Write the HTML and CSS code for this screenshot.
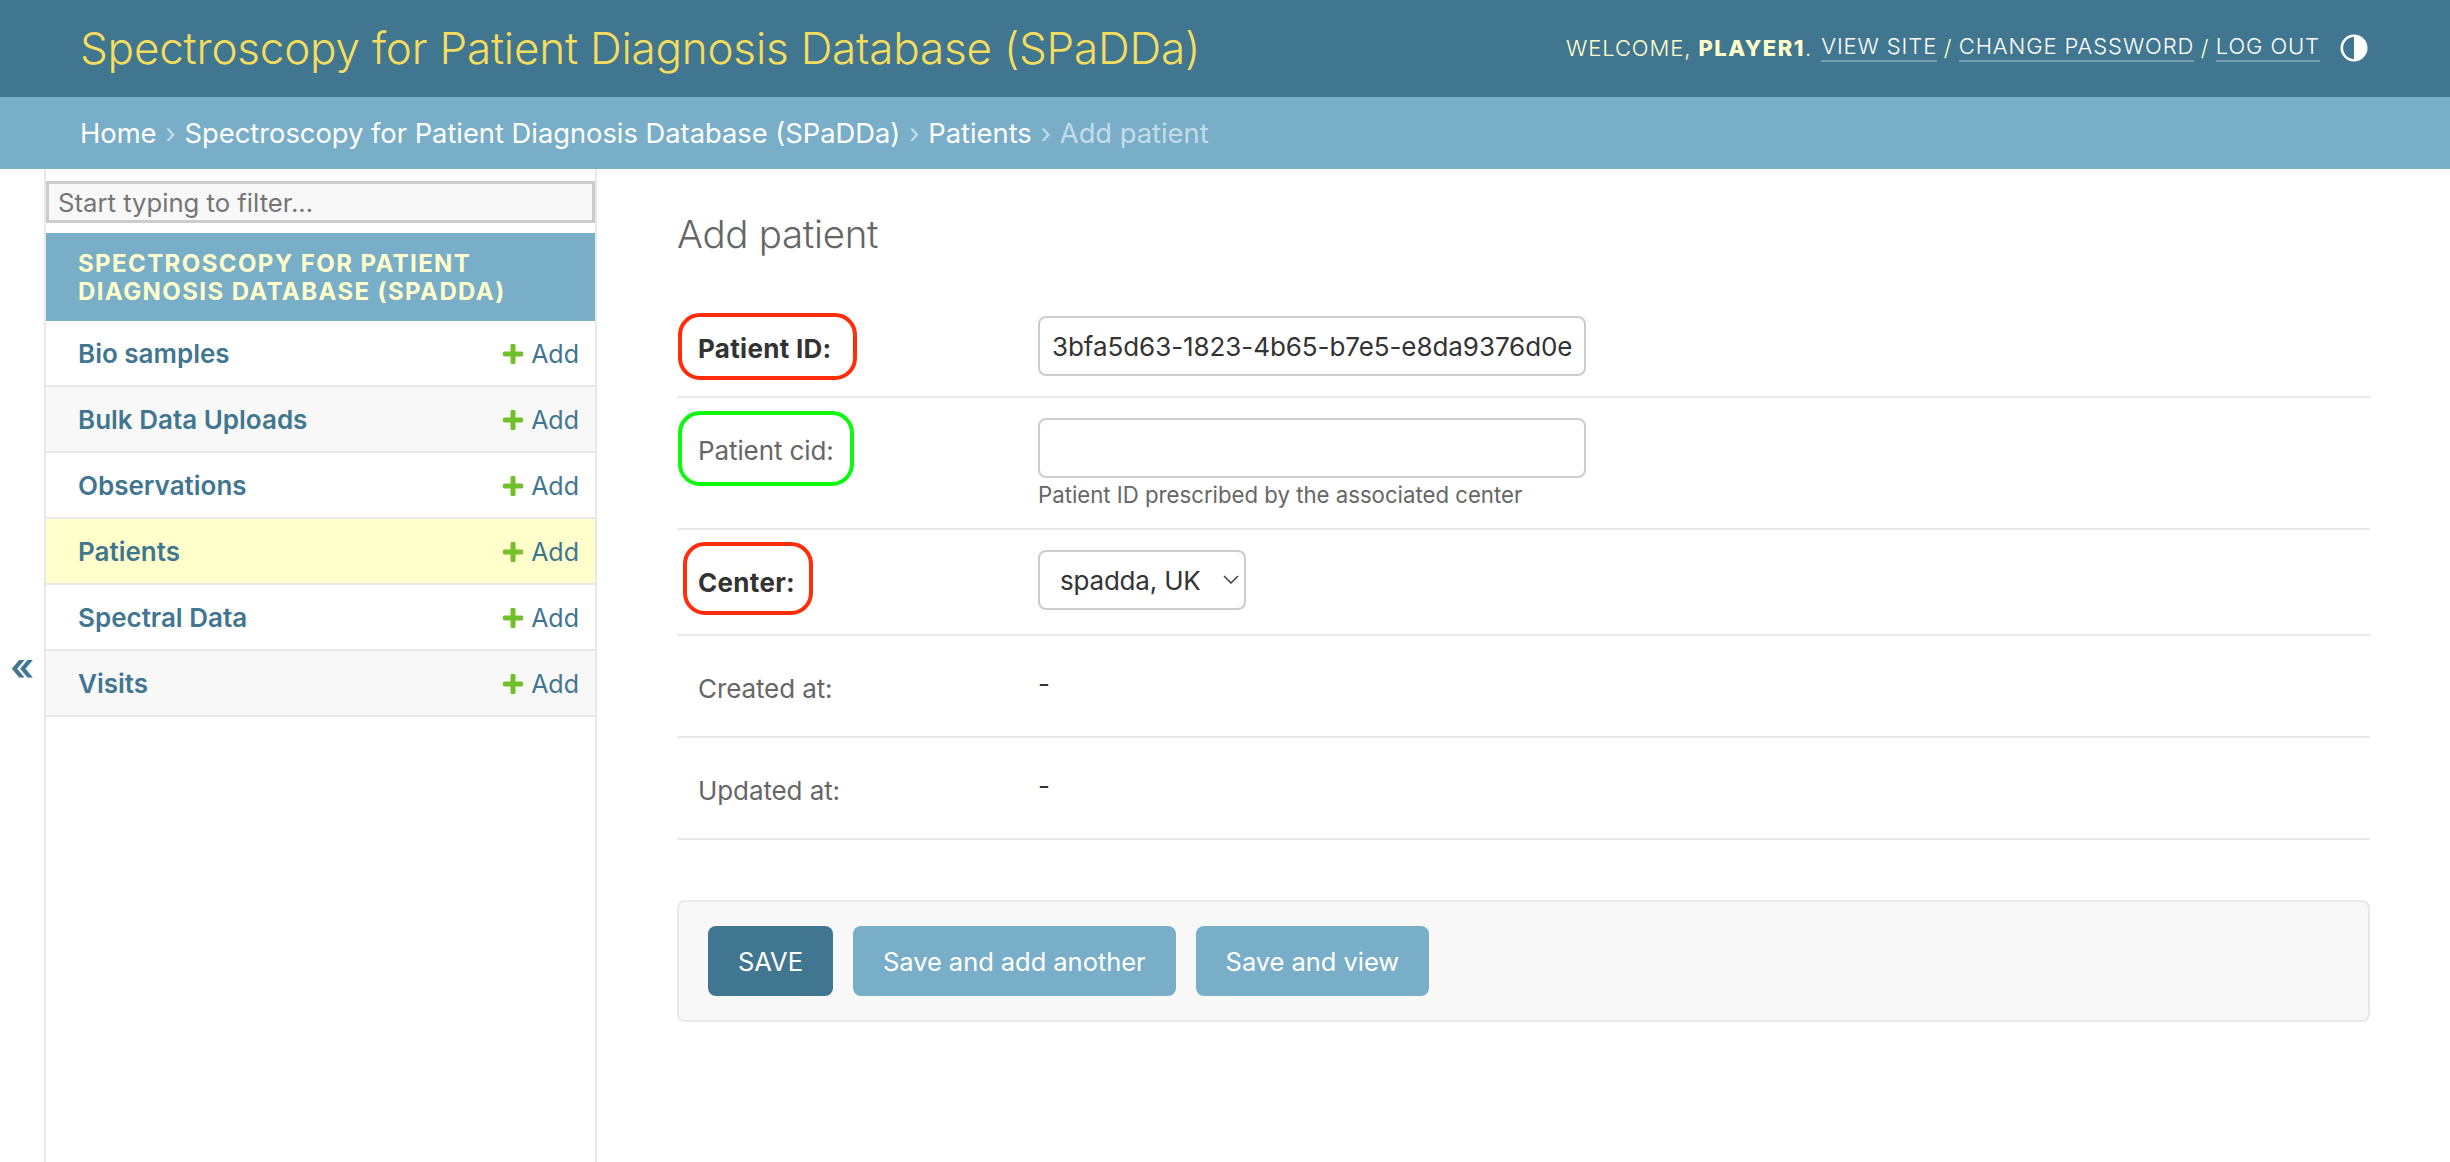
FILE: index.html
```html
<!DOCTYPE html>
<html lang="en">
<head>
<meta charset="utf-8">
<title>Add patient | SPaDDa</title>
<link rel="stylesheet" href="styles.css">
</head>
<body>
<header class="topbar">
  <div class="brand">Spectroscopy for Patient Diagnosis Database (SPaDDa)</div>
  <div class="tools">
    <span class="welcome">WELCOME, <strong>PLAYER1</strong>.</span>
    <a href="#">VIEW SITE</a><span class="slash">/</span><a href="#">CHANGE PASSWORD</a><span class="slash">/</span><a href="#">LOG OUT</a>
    <svg class="theme" viewBox="0 0 28 28" width="28" height="28" aria-hidden="true"><circle cx="14" cy="14" r="12.2" fill="none" stroke="#fff" stroke-width="2.6"/><path d="M14 2a12 12 0 0 1 0 24z" fill="#fff"/></svg>
  </div>
</header>
<nav class="crumbs">
  <a href="#">Home</a><span class="sep">›</span><a href="#">Spectroscopy for Patient Diagnosis Database (SPaDDa)</a><span class="sep">›</span><a href="#">Patients</a><span class="sep">›</span><span class="current">Add patient</span>
</nav>
<div class="main">
  <div class="toggle">«</div>
  <aside class="sidebar">
    <input class="filter" type="text" placeholder="Start typing to filter...">
    <div class="caption">SPECTROSCOPY FOR PATIENT DIAGNOSIS DATABASE (SPADDA)</div>
    <div class="model"><a class="name" href="#">Bio samples</a><a class="add" href="#"><svg class="plus" viewBox="0 0 20 20" width="20" height="20"><path d="M10 2v16M2 10h16" stroke="#70bf2b" stroke-width="5" stroke-linecap="round"/></svg>Add</a></div>
    <div class="model alt"><a class="name" href="#">Bulk Data Uploads</a><a class="add" href="#"><svg class="plus" viewBox="0 0 20 20" width="20" height="20"><path d="M10 2v16M2 10h16" stroke="#70bf2b" stroke-width="5" stroke-linecap="round"/></svg>Add</a></div>
    <div class="model"><a class="name" href="#">Observations</a><a class="add" href="#"><svg class="plus" viewBox="0 0 20 20" width="20" height="20"><path d="M10 2v16M2 10h16" stroke="#70bf2b" stroke-width="5" stroke-linecap="round"/></svg>Add</a></div>
    <div class="model selected"><a class="name" href="#">Patients</a><a class="add" href="#"><svg class="plus" viewBox="0 0 20 20" width="20" height="20"><path d="M10 2v16M2 10h16" stroke="#70bf2b" stroke-width="5" stroke-linecap="round"/></svg>Add</a></div>
    <div class="model"><a class="name" href="#">Spectral Data</a><a class="add" href="#"><svg class="plus" viewBox="0 0 20 20" width="20" height="20"><path d="M10 2v16M2 10h16" stroke="#70bf2b" stroke-width="5" stroke-linecap="round"/></svg>Add</a></div>
    <div class="model alt"><a class="name" href="#">Visits</a><a class="add" href="#"><svg class="plus" viewBox="0 0 20 20" width="20" height="20"><path d="M10 2v16M2 10h16" stroke="#70bf2b" stroke-width="5" stroke-linecap="round"/></svg>Add</a></div>
  </aside>
  <main class="content">
    <h1 class="title">Add patient</h1>
    <div class="form-row">
      <label class="label required">Patient ID:<span class="mark mark-id"></span></label>
      <div class="field"><input class="text" type="text" value="3bfa5d63-1823-4b65-b7e5-e8da9376d0e5"></div>
    </div>
    <div class="form-row">
      <label class="label">Patient cid:<span class="mark mark-cid"></span></label>
      <div class="field"><input class="text" type="text"><div class="help">Patient ID prescribed by the associated center</div></div>
    </div>
    <div class="form-row">
      <label class="label required">Center:<span class="mark mark-center"></span></label>
      <div class="field"><select class="picker"><option>spadda, UK</option></select></div>
    </div>
    <div class="form-row readonly"><div class="label">Created at:</div><div class="value">-</div></div>
    <div class="form-row readonly"><div class="label">Updated at:</div><div class="value">-</div></div>
    <div class="submit-row">
      <button class="btn btn-primary" type="button">SAVE</button>
      <button class="btn" type="button">Save and add another</button>
      <button class="btn" type="button">Save and view</button>
    </div>
  </main>
</div>
</body>
</html>
```
FILE: styles.css
```css
* { box-sizing: border-box; }
html, body { margin: 0; height: 100%; }
body {
  display: flex;
  flex-direction: column;
  min-height: 1162px;
  overflow: hidden;
  background: #fff;
  color: #333;
  font-family: Inter, "Liberation Sans", sans-serif;
  font-size: 26px;
}
a { text-decoration: none; }

.topbar {
  flex: 0 0 97px;
  display: flex;
  align-items: center;
  justify-content: space-between;
  padding: 0 82px 2px 80px;
  background: #417690;
  color: #ffc;
}
.brand { font-size: 44px; font-weight: 300; color: #f5dd5d; letter-spacing: -0.2px; white-space: nowrap; }
.tools { display: flex; align-items: center; font-size: 22px; letter-spacing: 0.9px; font-weight: 300; }
.welcome { margin-right: 9px; white-space: pre; }
.welcome strong { font-weight: 800; letter-spacing: 1.5px; }
.tools a { color: #fff; border-bottom: 2px solid rgba(255, 255, 255, 0.3); line-height: 27px; }
.slash { margin: 0 6.5px; }
.theme { margin-left: 20px; }

.crumbs {
  flex: 0 0 72px;
  display: flex;
  align-items: center;
  padding: 0 80px;
  background: #79aec8;
  color: #c4dce8;
  font-size: 27.3px;
  white-space: nowrap;
}
.crumbs a { color: #fff; }
.sep { margin: 0 8.8px; color: #c4dce8; }

.main { flex: 1; display: flex; min-height: 0; }
.toggle {
  flex: 0 0 44px;
  display: flex;
  align-items: center;
  justify-content: center;
  color: #417690;
  font-size: 38px;
  font-weight: 600;
}
.sidebar {
  flex: 0 0 553px;
  border-left: 2px solid #e8e8e8;
  border-right: 2px solid #e8e8e8;
  padding-top: 12px;
}
.filter {
  display: block;
  width: 100%;
  height: 42px;
  margin-bottom: 10px;
  padding: 0 9px;
  border: 3px solid #ccc;
  background: #f8f8f8;
  font: inherit;
  font-size: 25.7px;
  color: #333;
}
.filter::placeholder { color: #757575; opacity: 1; }
.caption {
  height: 88px;
  padding: 17px 32px 0;
  background: #79aec8;
  color: #ffc;
  font-size: 24px;
  font-weight: 700;
  line-height: 28px;
  letter-spacing: 1.4px;
}
.model {
  height: 66px;
  display: flex;
  align-items: center;
  justify-content: space-between;
  padding: 0 16px 0 32px;
  border-bottom: 2px solid #e8e8e8;
}
.alt { background: #f8f8f8; }
.selected { background: #ffc; }
.name { color: #417690; font-weight: 600; }
.add { display: flex; align-items: center; color: #417690; font-size: 25px; padding-top: 1px; }
.plus { margin-right: 8px; }

.content { flex: 1; padding: 0 80px; min-width: 0; }
.title {
  margin: 0;
  height: 127px;
  padding-top: 40px;
  font-size: 38.5px;
  font-weight: 300;
  line-height: 50px;
  letter-spacing: -0.3px;
  color: #666;
}
.form-row {
  display: flex;
  padding: 20px 20px 20px 21px;
  border-bottom: 2px solid #e8e8e8;
}
.label { position: relative; flex: 0 0 340px; padding-top: 17px; color: #666; line-height: 32px; letter-spacing: -0.1px; }
.required { font-weight: 700; color: #333; letter-spacing: 0.3px; }
.mark { position: absolute; border: 4px solid #ff2d0a; border-radius: 22px; }
.mark-id { left: -20px; top: -3px; width: 179px; height: 67px; }
.mark-cid { left: -20px; top: -7px; width: 176px; height: 75px; border-color: #0df80d; }
.mark-center { left: -15px; top: -8px; width: 130px; height: 73px; }
.field { flex: 1; min-width: 0; }
.text {
  display: block;
  width: 548px;
  height: 60px;
  padding: 0 12px;
  border: 2px solid #ccc;
  border-radius: 8px;
  background: #fff;
  color: #333;
  font: inherit;
  letter-spacing: -0.07px;
}
.help { margin-top: 4px; color: #666; font-size: 22.2px; line-height: 26px; }
.picker {
  display: block;
  width: 208px;
  height: 60px;
  margin-bottom: 4px;
  padding: 0 20px;
  border: 2px solid #ccc;
  border-radius: 8px;
  color: #333;
  font: inherit;
  letter-spacing: -0.2px;
  appearance: none;
  background: #fff url("data:image/svg+xml,%3Csvg xmlns='http://www.w3.org/2000/svg' width='16' height='10'%3E%3Cpath d='M1 1l7 7 7-7' fill='none' stroke='%23333' stroke-width='1.4'/%3E%3C/svg%3E") no-repeat right 5px center;
}
.readonly { height: 102px; }
.value { padding-top: 12px; line-height: 32px; }
.submit-row {
  display: flex;
  gap: 20px;
  margin-top: 60px;
  height: 122px;
  padding: 24px 29px;
  background: #f8f8f8;
  border: 2px solid #e8e8e8;
  border-radius: 8px;
}
.btn {
  height: 70px;
  padding: 0 30px;
  border: 0;
  border-radius: 8px;
  background: #79aec8;
  color: #fff;
  font: inherit;
  font-size: 25.5px;
  font-weight: 400;
  letter-spacing: -0.05px;
}
.btn-primary { background: #417690; }
```
